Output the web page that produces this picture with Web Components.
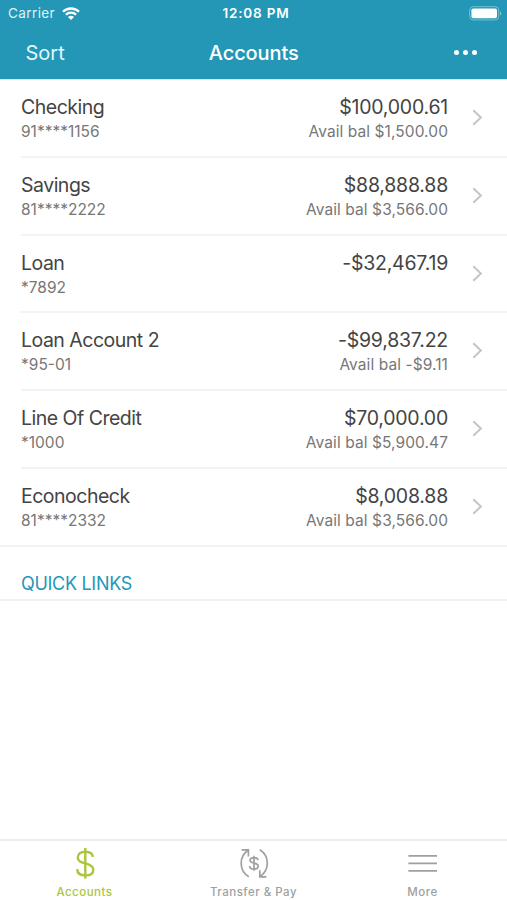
<!DOCTYPE html>
<html lang="en">
<head>
    <meta charset="UTF-8">
    <meta name="viewport" content="width=device-width, initial-scale=1.0">
    <title>Accounts</title>
    <style>
        body {
            margin: 0;
            background: #fff;
            font-family: Inter, "Liberation Sans", sans-serif;
        }
    </style>
</head>
<body>

    <bank-app></bank-app>


    <script>
        class StatusBar extends HTMLElement {
            constructor() {
                super();
                this.attachShadow({ mode: 'open' });
                this.shadowRoot.innerHTML = /* html */ `
                    <style>
                        :host {
                            display: grid;
                            grid-template-columns: 1fr auto 1fr;
                            align-items: center;
                            height: 27px;
                            padding: 0 5px 0 8px;
                            color: #fff;
                            font-size: 13.5px;
                            line-height: 27px;
                        }
                        .carrier {
                            display: flex;
                            align-items: center;
                            gap: 7px;
                            letter-spacing: 0.4px;
                            color: #dff3f8;
                        }
                        .time {
                            padding-left: 2px;
                            font-weight: 600;
                            letter-spacing: 0.8px;
                        }
                        .battery {
                            justify-self: end;
                        }
                        svg {
                            display: block;
                        }
                    </style>
                    <div class="carrier">
                        <span>Carrier</span>
                        <svg width="18" height="13" viewBox="0 0 18 13" fill="none" stroke="#fff" stroke-width="2.3">
                            <path d="M1 4.8a11.3 11.3 0 0 1 16 0M3.9 7.8a7.2 7.2 0 0 1 10.2 0"/>
                            <path d="M6 9.9a4.2 4.2 0 0 1 6 0L9 13z" fill="#fff" stroke="none"/>
                        </svg>
                    </div>
                    <span class="time">12:08 PM</span>
                    <svg class="battery" width="33" height="15" viewBox="0 0 33 15">
                        <rect x=".7" y=".7" width="29" height="13.2" rx="3.4" fill="none" stroke="#78c0d3"/>
                        <rect x="2.4" y="2.4" width="25.6" height="9.8" rx="1.8" fill="#fff"/>
                        <path d="M31 5.2c2 .8 2 3.6 0 4.4z" fill="#78c0d3"/>
                    </svg>
                `;
            }
        }

        class NavBar extends HTMLElement {
            constructor() {
                super();
                this.attachShadow({ mode: 'open' });
                this.shadowRoot.innerHTML = /* html */ `
                    <style>
                        :host {
                            display: grid;
                            grid-template-columns: 1fr auto 1fr;
                            align-items: center;
                            height: 52px;
                            padding: 0 28px 0 25.5px;
                            color: #fff;
                            font-size: 20px;
                            line-height: 52px;
                        }
                        .left {
                            color: #e0f6fb;
                        }
                        .title {
                            padding-left: 3px;
                            font-weight: 500;
                            letter-spacing: -0.1px;
                        }
                        .dots {
                            display: flex;
                            gap: 4px;
                            justify-self: end;
                            margin: -2px 2px 0 0;
                        }
                        i {
                            width: 5px;
                            height: 5px;
                            border-radius: 50%;
                            background: #fff;
                        }
                    </style>
                    <span class="left"><slot name="left"></slot></span>
                    <span class="title"><slot></slot></span>
                    <span class="dots"><i></i><i></i><i></i></span>
                `;
            }
        }

        class AccountRow extends HTMLElement {
            constructor() {
                super();
                this.attachShadow({ mode: 'open' });
                this.shadowRoot.innerHTML = /* html */ `
                    <style>
                        :host {
                            display: block;
                            padding-left: 21px;
                        }
                        .row {
                            display: flex;
                            box-sizing: border-box;
                            height: 77.8px;
                            padding: 15px 24px 0 0;
                            border-bottom: 2px solid #f3f3f4;
                        }
                        :host(:last-of-type) {
                            padding-left: 0;
                        }
                        :host(:last-of-type) .row {
                            padding-left: 21px;
                        }
                        .name, .amounts {
                            display: flex;
                            flex-direction: column;
                        }
                        .name {
                            flex: 1;
                        }
                        .amounts {
                            align-items: flex-end;
                        }
                        .big {
                            font-size: 19.5px;
                            line-height: 24px;
                            color: #444;
                        }
                        .name .big {
                            letter-spacing: -0.5px;
                        }
                        .amounts .big {
                            letter-spacing: -0.22px;
                        }
                        .small {
                            font-size: 15.5px;
                            line-height: 25px;
                            color: #777;
                        }
                        .amounts .small {
                            letter-spacing: 0.08px;
                        }
                        svg {
                            margin: 14px 0 0 24px;
                        }
                    </style>
                    <div class="row">
                        <div class="name">
                            <span class="big"><slot name="name"></slot></span>
                            <span class="small"><slot name="number"></slot></span>
                        </div>
                        <div class="amounts">
                            <span class="big"><slot name="balance"></slot></span>
                            <span class="small"><slot name="available"></slot></span>
                        </div>
                        <svg width="11" height="17" viewBox="0 0 11 17" fill="none" stroke="#c5c5c8" stroke-width="2">
                            <path d="M1.3 1.2l7.6 7.3-7.6 7.3"/>
                        </svg>
                    </div>
                `;
            }
        }

        class SectionTitle extends HTMLElement {
            constructor() {
                super();
                this.attachShadow({ mode: 'open' });
                this.shadowRoot.innerHTML = /* html */ `
                    <style>
                        :host {
                            display: block;
                            box-sizing: border-box;
                            height: 54.2px;
                            padding: 25px 0 0 21px;
                            border-bottom: 2px solid #f1f1f2;
                            font-size: 18px;
                            line-height: 24px;
                            letter-spacing: -0.3px;
                            color: #2497b8;
                        }
                    </style>
                    <slot></slot>
                `;
            }
        }

        const tabIcons = {
            dollar: `
                <g stroke-width="2.4">
                    <path d="M15.300 0v30.600"/>
                    <path d="M22.900 8.900c-.4-3.300-3.300-5.200-7.600-5.200-4.500 0-7.500 2.200-7.500 5.700 0 3.900 3.200 4.900 7.500 6 4.900 1.200 8 2.500 8 6.300 0 3.700-3.200 5.700-8 5.700-4.900 0-8-2.200-8.100-6.300"/>
                </g>`,
            transfer: `
                <path stroke-width="1.7" d="M9.800 28.800A15.800 15.800 0 0 1 9 2.300M2.600 1.800h6.800v6.800M20.700 1.700A15.800 15.800 0 0 1 21.500 28.200M27.400 28.800h-6.600v-6.500"/>
                <path stroke-width="1.7" d="M15 7.800v15M19 12.200c-.2-1.700-1.700-2.600-4-2.600-2.400 0-4 1.100-4 2.700 0 1.900 1.700 2.400 4 2.900 2.600.5 4.200 1.200 4.200 3.100s-1.700 2.800-4.200 2.800c-2.600 0-4.300-1-4.400-3.100"/>`,
            menu: `
                <path stroke-width="1.7" d="M.4 7.800h28.600M.4 15.400h28.600M.4 22.800h28.600"/>`
        };

        class TabItem extends HTMLElement {
            constructor() {
                super();
                this.attachShadow({ mode: 'open' });
            }

            connectedCallback() {
                this.shadowRoot.innerHTML = /* html */ `
                    <style>
                        :host {
                            display: flex;
                            flex: 1;
                            flex-direction: column;
                            align-items: center;
                            padding-top: 6.6px;
                            color: #a0a0a0;
                            font-size: 11.5px;
                            font-weight: 500;
                            line-height: 16px;
                            letter-spacing: 0.5px;
                        }
                        :host([active]) {
                            color: #a9c73c;
                        }
                        svg {
                            display: block;
                            margin-bottom: 5.4px;
                        }
                    </style>
                    <svg width="30" height="31" viewBox="0 0 30 31" fill="none" stroke="currentColor">
                        ${tabIcons[this.getAttribute('icon')]}
                    </svg>
                    <span><slot></slot></span>
                `;
            }
        }

        class BankApp extends HTMLElement {
            constructor() {
                super();
                this.attachShadow({ mode: 'open' });
                this.accounts = [
                    ['Checking', '91****1156', '$100,000.61', 'Avail bal $1,500.00'],
                    ['Savings', '81****2222', '$88,888.88', 'Avail bal $3,566.00'],
                    ['Loan', '*7892', '-$32,467.19', ''],
                    ['Loan Account 2', '*95-01', '-$99,837.22', 'Avail bal -$9.11'],
                    ['Line Of Credit', '*1000', '$70,000.00', 'Avail bal $5,900.47'],
                    ['Econocheck', '81****2332', '$8,008.88', 'Avail bal $3,566.00']
                ];
                this.render();
            }

            render() {
                const rows = this.accounts.map(([name, number, balance, available]) => `
                    <account-row>
                        <span slot="name">${name}</span>
                        <span slot="number">${number}</span>
                        <span slot="balance">${balance}</span>
                        <span slot="available">${available}</span>
                    </account-row>`).join('');

                this.shadowRoot.innerHTML = /* html */ `
                    <style>
                        :host {
                            display: flex;
                            flex-direction: column;
                            height: 900px;
                            overflow: hidden;
                        }
                        header {
                            background: #2497b7;
                            background-clip: padding-box;
                            border-bottom: 1px solid #c4eef5;
                        }
                        main {
                            flex: 1;
                        }
                        nav {
                            display: flex;
                            box-sizing: border-box;
                            height: 61px;
                            border-top: 2px solid #ececec;
                        }
                    </style>
                    <header>
                        <status-bar></status-bar>
                        <nav-bar><span slot="left">Sort</span>Accounts</nav-bar>
                    </header>
                    <main>
                        ${rows}
                        <section-title>QUICK LINKS</section-title>
                    </main>
                    <nav>
                        <tab-item icon="dollar" active>Accounts</tab-item>
                        <tab-item icon="transfer">Transfer &amp; Pay</tab-item>
                        <tab-item icon="menu">More</tab-item>
                    </nav>
                `;
            }
        }


        customElements.define('status-bar', StatusBar);
        customElements.define('nav-bar', NavBar);
        customElements.define('account-row', AccountRow);
        customElements.define('section-title', SectionTitle);
        customElements.define('tab-item', TabItem);
        customElements.define('bank-app', BankApp);
    </script>
</body>
</html>
